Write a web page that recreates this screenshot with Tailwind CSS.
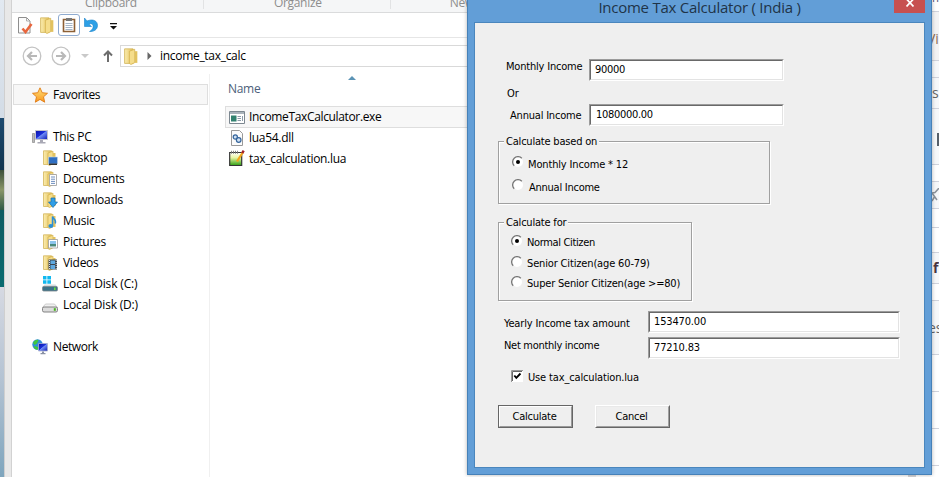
<!DOCTYPE html>
<html lang="en">
<head>
<meta charset="utf-8">
<title>Income Tax Calculator</title>
<script src="https://cdn.jsdelivr.net/npm/@tailwindcss/browser@4"></script>
</head>
<body class="relative h-[477px] w-[939px] overflow-hidden bg-white font-['Open_Sans','Noto_Sans',sans-serif] text-[12px] text-black">
<svg width="0" height="0" class="absolute">
  <defs>
    <linearGradient id="fg" x1="0" x2="1"><stop offset="0" stop-color="#fbedb0"/><stop offset="1" stop-color="#e3bf56"/></linearGradient>
    <linearGradient id="sg" x1="0" y1="0" x2="0" y2="1"><stop offset="0" stop-color="#ffe27a"/><stop offset="1" stop-color="#f9971e"/></linearGradient>
    <linearGradient id="scr" x1="0" y1="0" x2="1" y2="1"><stop offset="0" stop-color="#0a12a8"/><stop offset=".45" stop-color="#1b2fd8"/><stop offset=".5" stop-color="#6f8cf5"/><stop offset="1" stop-color="#0b18b5"/></linearGradient>
    <linearGradient id="gg" x1="0" y1="0" x2="0" y2="1"><stop offset="0" stop-color="#fff"/><stop offset=".4" stop-color="#e8f5a0"/><stop offset="1" stop-color="#2f9e12"/></linearGradient>
    <symbol id="folder" viewBox="0 0 16 16"><path d="M1.500.8h8v13.700h-8z" fill="url(#fg)" stroke="#d3b65c" stroke-width=".8"/><path d="M6 3 11 1.200v12.600L7.500 15.500 6 14.600z" fill="#f5dd8b" stroke="#d2b04b" stroke-width=".7"/><path d="M11 3h2.500v11H11z" fill="#e2c25f"/></symbol>
  </defs>
</svg>

<!-- wallpaper -->
<div class="absolute left-0 top-0 h-[477px] w-[5px]">
  <div class="h-[118px] bg-linear-to-b from-[#e2e9f1] to-[#d3dce6]"></div>
  <div class="h-[52px] bg-linear-to-b from-[#1d4a6e] to-[#12354f]"></div>
  <div class="h-[40px] bg-linear-to-b from-[#3c4f3a] via-[#8a9668] to-[#2f5a45]"></div>
  <div class="h-[77px] bg-linear-to-b from-[#0e5c62] to-[#0a6b70]"></div>
  <div class="h-[190px] bg-linear-to-b from-[#d6d9e2] via-[#b3c2d2] to-[#7ea5bd]"></div>
</div>

<!-- file explorer -->
<section class="absolute left-[4px] top-0 flex h-[477px] w-[470px] flex-col border-l border-[#cfcfcf] bg-[#e8e8e8] pl-[6px] tracking-[-0.3px]">
  <div class="flex h-full flex-col border-l border-[#d2d2d2] bg-white">
    <div class="flex h-[13px] shrink-0 overflow-hidden border-b border-[#dadbdc] bg-[#f5f6f7] leading-[16px] text-[#8d8d8d]">
      <div class="mb-[3px] w-[196px] border-r border-[#e2e3e4] pl-[73px]"><p class="-mt-[5px]">Clipboard</p></div>
      <div class="mb-[3px] w-[191px] border-r border-[#e2e3e4] pl-[70px]"><p class="-mt-[5px]">Organize</p></div>
      <div class="pl-[59px]"><p class="-mt-[5px]">New</p></div>
    </div>
    <div class="flex h-[25px] shrink-0 items-center border-b border-[#e6e6e6] pl-[5px]">
      <svg class="mr-[5px] h-[17px] w-[17px]" viewBox="0 0 17 17"><path d="M1.500.5h8l3.500 3.500v12H1.500z" fill="#fbfbfb" stroke="#8e8e8e"/><path d="M9.500.5v3.500H13" fill="none" stroke="#aaa"/><path d="M5.500 11.500 8.500 15 14.500 7" fill="none" stroke="#e8663d" stroke-width="2.600"/></svg>
      <svg class="mr-[2px] h-[17px] w-[17px]"><use href="#folder"/></svg>
      <div class="flex h-[22px] w-[22px] items-center justify-center rounded-[3px] border border-[#8fabd0]">
        <svg class="h-[16px] w-[14px]" viewBox="0 0 14 16"><path d="M1.500 2.500h11v12h-11z" fill="#fff" stroke="#8d5f34" stroke-width="1.600"/><path d="M4 1h6v3H4z" fill="#777"/><path d="M3.500 6.500h7m-7 2h7m-7 2h7m-7 2h7" stroke="#a5b5c8"/></svg>
      </div>
      <svg class="ml-[4px] h-[16px] w-[15px]" viewBox="0 0 15 16"><path d="M.5 1v8.500h7L5 7.200C7.500 6 9.800 7.500 9 10.500 8.500 12.300 7.500 13.300 5.500 14.500c4.500.3 8-2 8-6C13.500 3.800 9 1.500 3 4z" fill="#2da0e6" stroke="#1b83ca" stroke-width=".6"/></svg>
      <svg class="ml-[11px] mt-[2px] h-[7px] w-[7px]" viewBox="0 0 7 7"><path d="M0 0h7v1.300H0zM0 3h7L3.500 6.500z" fill="#111"/></svg>
    </div>
    <div class="flex h-[36px] shrink-0 items-center pl-[10px]">
      <svg class="mr-[9px] h-[20px] w-[20px]" viewBox="0 0 20 20" fill="none" stroke="#c3c3c3" stroke-width="1.300"><circle cx="10" cy="10" r="8.800"/><path d="M15 10H6m4-4-4 4 4 4" stroke="#b8b8b8" stroke-width="2.200"/></svg>
      <svg class="mr-[10px] h-[20px] w-[20px]" viewBox="0 0 20 20" fill="none" stroke="#c3c3c3" stroke-width="1.300"><circle cx="10" cy="10" r="8.800"/><path d="M5 10h9m-4-4 4 4-4 4" stroke="#b8b8b8" stroke-width="2.200"/></svg>
      <svg class="mr-[14px] h-[4px] w-[8px]" viewBox="0 0 8 4"><path d="M0 0h8L4 4z" fill="#c9c9c9"/></svg>
      <svg class="mr-[7px] h-[12px] w-[10px]" viewBox="0 0 10 12" fill="none" stroke="#6d6d6d" stroke-width="2"><path d="M5 12V1.500M1 5.500l4-4 4 4"/></svg>
      <div class="flex h-[22px] flex-1 items-center border border-r-0 border-[#d9d9d9] pl-[2px]">
        <svg class="h-[17px] w-[17px]"><use href="#folder"/></svg>
        <svg class="ml-[7px] h-[8px] w-[5px]" viewBox="0 0 5 8"><path d="M.5 0 4.500 4 .5 8z" fill="#666"/></svg>
        <span class="ml-[8px]">income_tax_calc</span>
      </div>
    </div>
    <div class="flex min-h-0 flex-1">
      <nav class="w-[198px] border-r border-[#f0f0f0] pt-[10px] leading-[21px]">
        <div class="ml-px mr-px flex h-[21px] items-center border border-[#dedede] bg-[#f7f7f7] pl-[18px]">
          <svg class="mr-[5px] h-[16px] w-[16px]" viewBox="0 0 16 16"><path d="m8 .8 2.200 4.900 5.300.6-4 3.500 1.200 5.400L8 12.400l-4.700 2.800 1.200-5.400-4-3.500 5.300-.6z" fill="url(#sg)" stroke="#e07b14" stroke-width=".9"/></svg>
          <span class="tracking-[-0.4px]">Favorites</span>
        </div>
        <div class="mt-[21px] flex h-[21px] items-center pl-[20px]">
          <svg class="mr-[5px] h-[16px] w-[16px]" viewBox="0 0 16 16"><path d="M.5 4.500h2v9h-2z" fill="#bbb" stroke="#888" stroke-width=".7"/><path d="M3.500 1.500h12v9h-12z" fill="url(#scr)" stroke="#c4c4cc"/><path d="M8 11h3v2H8zM5.500 13h8v1.600h-8z" fill="#a9a9b5"/></svg>
          <span>This PC</span>
        </div>
        <div class="flex h-[21px] items-center pl-[30px]">
          <svg class="mr-[5px] h-[16px] w-[16px]" viewBox="0 0 16 16"><use href="#folder"/><path d="M6.500 7h9v7h-9z" fill="#2f6fc2" stroke="#c5d6ea" stroke-width=".6"/><path d="M7 13.500h8v1.500H7z" fill="#333"/></svg>
          <span>Desktop</span>
        </div>
        <div class="flex h-[21px] items-center pl-[30px]">
          <svg class="mr-[5px] h-[16px] w-[16px]" viewBox="0 0 16 16"><use href="#folder"/><path d="M7.500 3.500h7v11h-7z" fill="#fff" stroke="#999" stroke-width=".8"/><path d="M9 6h4M9 8.200h4m-4 2.200h4m-4 2h4" stroke="#5d82b8" stroke-width=".9"/></svg>
          <span>Documents</span>
        </div>
        <div class="flex h-[21px] items-center pl-[30px]">
          <svg class="mr-[5px] h-[16px] w-[16px]" viewBox="0 0 16 16"><use href="#folder"/><path d="M9 6h4v4h2.500L11 15.500 6.500 10H9z" fill="#2f9ee6" stroke="#176fae" stroke-width=".7"/></svg>
          <span>Downloads</span>
        </div>
        <div class="flex h-[21px] items-center pl-[30px]">
          <svg class="mr-[5px] h-[16px] w-[16px]" viewBox="0 0 16 16"><use href="#folder"/><ellipse cx="8.800" cy="13" rx="2.400" ry="1.900" fill="#2b8fd8"/><path d="M10.500 13V3.500c.5 2.500 4.300 3.200 2.700 7" fill="none" stroke="#2b8fd8" stroke-width="1.500"/></svg>
          <span class="tracking-[-0.2px]">Music</span>
        </div>
        <div class="flex h-[21px] items-center pl-[30px]">
          <svg class="mr-[5px] h-[16px] w-[16px]" viewBox="0 0 16 16"><use href="#folder"/><path d="M6.500 5.500h9v8.500h-9z" fill="#fff" stroke="#999" stroke-width=".8"/><path d="M8 7h6v3H8z" fill="#8cc4ec"/><path d="M8 10h6v2.500H8z" fill="#4a8a7c"/></svg>
          <span class="tracking-[-0.25px]">Pictures</span>
        </div>
        <div class="flex h-[21px] items-center pl-[30px]">
          <svg class="mr-[5px] h-[16px] w-[16px]" viewBox="0 0 16 16"><use href="#folder"/><path d="M6.500 4.500h8.500v10H6.500z" fill="#3d4650"/><path d="M8.500 5.500h4.500v3.500H8.500zm0 4.500h4.500v4H8.500z" fill="#5fa9e0"/><path d="M7.500 5v10M14.200 5v10" stroke="#ddd" stroke-dasharray="1 1"/></svg>
          <span>Videos</span>
        </div>
        <div class="flex h-[21px] items-center pl-[30px]">
          <svg class="mr-[5px] h-[16px] w-[16px]" viewBox="0 0 16 16"><path d="M1 0h3.500v3.500H1zM5.300 0h3.700v3.500H5.300zM1 4.300h3.500v3.500H1zM5.300 4.300h3.700v3.500H5.300z" fill="#10b8f0"/><path d="m2.500 8.500h11l2 2.500H.5z" fill="#d4dade"/><rect x=".5" y="10.500" width="15" height="4.500" rx="1.200" fill="#3c7288" stroke="#7a858c" stroke-width=".8"/><path d="M12 11.500h1.600v2.500H12z" fill="#63e03c"/></svg>
          <span class="tracking-[-0.15px]">Local Disk (C:)</span>
        </div>
        <div class="flex h-[21px] items-center pl-[30px]">
          <svg class="mr-[5px] h-[16px] w-[16px]" viewBox="0 0 16 16"><path d="M3.500 7h9l3 3.500H.5z" fill="#f1f1f1" stroke="#bbb" stroke-width=".7"/><rect x=".5" y="10" width="15" height="5" rx="1.500" fill="#dcdcdc" stroke="#777" stroke-width=".9"/><path d="M11.800 11.200h2v2.600h-2z" fill="#45b51e"/></svg>
          <span class="tracking-[-0.2px]">Local Disk (D:)</span>
        </div>
        <div class="mt-[21px] flex h-[21px] items-center pl-[20px]">
          <svg class="mr-[5px] h-[16px] w-[16px]" viewBox="0 0 16 16"><circle cx="5.500" cy="5.500" r="5.200" fill="#2f8fd8"/><path d="M1 3.500C3 1 5 .5 6.500 1L5 4.500 2.500 6zM3 7l3 1v2.500l-2 .2L1.500 8z" fill="#3fc83c"/><path d="M6.500 4.500h9v7.500h-9z" fill="url(#scr)" stroke="#a9b0cc" stroke-width=".8"/><path d="M10 12.500h2v1.500h-2zM8.500 14h5v1.200h-5z" fill="#8a91a5"/></svg>
          <span class="tracking-[-0.4px]">Network</span>
        </div>
      </nav>
      <div class="flex-1 pl-[15px]">
        <svg class="ml-[123px] mt-[2px] h-[4px] w-[8px]" viewBox="0 0 8 4"><path d="M0 4 4 0 8 4z" fill="#5b93b5"/></svg>
        <p class="ml-[3px] w-fit leading-[18px] text-[#4c607a]">Name</p>
        <div class="mt-[8px] flex h-[22px] items-center border border-r-0 border-[#dedede] bg-[#f7f7f7] pl-[3px]">
          <svg class="mr-[4px] h-[13px] w-[16px]" viewBox="0 0 16 13"><path d="M.5.5h15v12H.5z" fill="#fff" stroke="#7c8790"/><path d="M1 1h14v2H1z" fill="#a9b3bb"/><path d="M2 4.500h5.500v6H2z" fill="#31816f"/><path d="M8.500 5.500h3.500m-3.500 2h3.500m-3.500 2h3.500M13.500 5v5" stroke="#8a9aa8"/></svg>
          <span class="tracking-[-0.35px]">IncomeTaxCalculator.exe</span>
        </div>
        <div class="flex h-[20px] items-center pl-[4px]">
          <svg class="mr-[4px] h-[16px] w-[16px]" viewBox="0 0 16 16"><path d="M2.500.5h8l3 3v12h-11z" fill="#fbfbfb" stroke="#999"/><circle cx="6.300" cy="7" r="2.100" fill="#cfe0f2" stroke="#35659c" stroke-width="1.200"/><circle cx="9.700" cy="10" r="2.300" fill="#cfe0f2" stroke="#35659c" stroke-width="1.200"/></svg>
          <span>lua54.dll</span>
        </div>
        <div class="flex h-[21px] items-center pl-[4px]">
          <svg class="mr-[4px] h-[17px] w-[16px]" viewBox="0 0 16 17"><path d="M.7 2.500h12v13H.7z" fill="url(#gg)" stroke="#333" stroke-width="1.200"/><path d="M2.500.8v3m2-3v3m2-3v3m2-3v3" stroke="#777" stroke-width=".9"/><path d="M8 11.500 14 2" stroke="#f2a51d" stroke-width="2.200"/><path d="m13.200 3.200 1.500-2.500" stroke="#a3212a" stroke-width="2.400"/></svg>
          <span>tax_calculation.lua</span>
        </div>
      </div>
    </div>
  </div>
</section>

<!-- browser page -->
<aside class="absolute left-[908px] top-0 flex h-[477px] w-[31px] flex-col overflow-hidden bg-white pl-[24px] text-[14px] leading-none text-[#666]">
  <div class="h-[11px] text-[12px]"><p class="-mt-[8px] text-[#557]">m</p></div>
  <div class="h-[50px] border-b border-t border-[#d0d3dc] bg-[#f3f3f4] pt-[20px]"><p class="-ml-[5px] text-[#8a6a55]">Vi</p></div>
  <div class="h-[17px] border-b border-[#d0d3dc] bg-[#f6f8fa]"></div>
  <div class="h-[31px] border-b border-[#d0d3dc] bg-[#f6f8fa] pt-[8px]">s</div>
  <div class="h-[56px] border-b border-[#d0d3dc] bg-[#f6f8fa] pl-[5px] pt-[24px]"><div class="h-[13px] w-[10px] border-2 border-[#57606a]"></div></div>
  <div class="h-[17px] border-b border-[#d0d3dc]"></div>
  <div class="h-[27px] border-b border-[#d0d3dc] bg-[#f6f8fa] pt-[6px]"><svg class="h-[14px] w-[14px]" viewBox="0 0 14 14" fill="none" stroke="#8b929a" stroke-width="1.500"><path d="M0 5 3 4.500 7 0M0 5l5 7M3 8l-3 5"/></svg></div>
  <div class="h-[19px] border-b border-[#d0d3dc]"></div>
  <div class="h-[25px] border-b border-[#d0d3dc]"></div>
  <div class="h-[31px] border-b border-[#d0d3dc] bg-[#f6f8fa] pl-px pt-[8px] font-bold text-[#4a3540]">fi</div>
  <div class="h-[17px] border-b border-[#d0d3dc]"></div>
  <div class="h-[54px] border-b border-[#d0d3dc] bg-[#f6f8fa] pt-[20px]"><p class="-ml-[4px]">es</p></div>
  <div class="h-[37px] border-b border-[#d0d3dc]"></div>
  <div class="h-[37px] border-b border-[#d0d3dc]"></div>
  <div class="h-[37px] border-b border-[#d0d3dc]"></div>
  <div class="-ml-[24px] mt-auto h-[2px] w-[8px] bg-[#d5d5d8]"></div>
</aside>

<!-- calculator dialog -->
<section class="absolute left-[467px] top-0 flex h-[475px] w-[465px] flex-col border border-t-0 border-[#4681b8] bg-[#629ed7] px-[6px] pb-[6px] shadow-[0_0_4px_rgba(0,0,0,0.3)]">
  <header class="relative flex h-[22px] shrink-0 justify-center text-[15px] leading-[15px] tracking-[-0.25px] text-[#1f3448]">
    <h1 class="h-fit whitespace-pre">Income Tax Calculator ( India )</h1>
    <button class="absolute right-0 top-0 flex h-[13px] w-[31px] justify-center bg-[#c75050]" aria-label="Close"><svg class="-mt-px h-[8px] w-[8px]" viewBox="0 0 8 8"><path d="m.5 0 7 7.500M7.500 0l-7 7.500" stroke="#fff" stroke-width="1.700"/></svg></button>
  </header>
  <main class="flex-1 border border-[#4a86bd] bg-[#efefef] pl-[23px] pt-[36px] font-['DejaVu_Sans_Condensed','DejaVu_Sans',sans-serif] text-[11px] leading-[14px] tracking-[-0.15px]">
    <div class="flex h-[22px]">
      <label class="ml-[8px] mt-px w-[83px] shrink-0 tracking-[-0.2px]">Monthly Income</label>
      <div class="h-[22px] w-[195px] border border-b-white border-l-[#9b9b9b] border-r-white border-t-[#9b9b9b]"><div class="h-full border border-b-[#e3e3e3] border-l-[#696969] border-r-[#e3e3e3] border-t-[#696969] bg-white pl-[4px] pt-[2px] tracking-[-0.3px]">90000</div></div>
    </div>
    <p class="ml-[9px] mt-[6px] h-[17px] w-fit">Or</p>
    <div class="flex h-[22px]">
      <label class="ml-[12px] mt-[5px] w-[79px] shrink-0 tracking-[-0.2px]">Annual Income</label>
      <div class="h-[22px] w-[195px] border border-b-white border-l-[#9b9b9b] border-r-white border-t-[#9b9b9b]"><div class="h-full border border-b-[#e3e3e3] border-l-[#696969] border-r-[#e3e3e3] border-t-[#696969] bg-white pl-[5px] pt-[2px] tracking-[-0.3px]">1080000.00</div></div>
    </div>
    <fieldset class="mt-[15px] h-[63px] w-[272px] border border-[#a0a0a0] shadow-[1px_1px_0_#fff,inset_1px_1px_0_#fff] pl-[13px]">
      <p class="-ml-[8px] -mt-[7px] w-fit bg-[#efefef] px-[2px] tracking-[-0.2px]">Calculate based on</p>
      <div class="mt-[7px] flex h-[15px]"><svg class="mr-[4px] h-[12px] w-[12px]" viewBox="0 0 12 12"><circle cx="6" cy="6" r="5" fill="#fff"/><path d="M2.200 9.800A5.300 5.300 0 0 1 9.800 2.200" fill="none" stroke="#777" stroke-width="1.300"/><circle cx="6" cy="6" r="2" fill="#000"/></svg><span class="mt-[2px]">Monthly Income * 12</span></div>
      <div class="mt-[8px] flex h-[15px]"><svg class="mr-[5px] h-[12px] w-[12px]" viewBox="0 0 12 12"><circle cx="6" cy="6" r="5" fill="#fff"/><path d="M2.200 9.800A5.300 5.300 0 0 1 9.800 2.200" fill="none" stroke="#777" stroke-width="1.300"/></svg><span class="mt-[2px] tracking-[-0.25px]">Annual Income</span></div>
    </fieldset>
    <fieldset class="mt-[18px] h-[79px] w-[194px] border border-[#a0a0a0] shadow-[1px_1px_0_#fff,inset_1px_1px_0_#fff] pl-[12px]">
      <p class="-ml-[7px] -mt-[7px] w-fit bg-[#efefef] px-[2px] tracking-[-0.2px]">Calculate for</p>
      <div class="mt-[4px] flex h-[21px]"><svg class="mr-[4px] mt-px h-[12px] w-[12px]" viewBox="0 0 12 12"><circle cx="6" cy="6" r="5" fill="#fff"/><path d="M2.200 9.800A5.300 5.300 0 0 1 9.800 2.200" fill="none" stroke="#777" stroke-width="1.300"/><circle cx="6" cy="6" r="2" fill="#000"/></svg><span class="mt-[2px] tracking-[-0.35px]">Normal Citizen</span></div>
      <div class="flex h-[20px]"><svg class="mr-[4px] mt-px h-[12px] w-[12px]" viewBox="0 0 12 12"><circle cx="6" cy="6" r="5" fill="#fff"/><path d="M2.200 9.800A5.300 5.300 0 0 1 9.800 2.200" fill="none" stroke="#777" stroke-width="1.300"/></svg><span class="mt-[2px]">Senior Citizen(age 60-79)</span></div>
      <div class="flex h-[20px]"><svg class="mr-[4px] mt-px h-[12px] w-[12px]" viewBox="0 0 12 12"><circle cx="6" cy="6" r="5" fill="#fff"/><path d="M2.200 9.800A5.300 5.300 0 0 1 9.800 2.200" fill="none" stroke="#777" stroke-width="1.300"/></svg><span class="mt-[2px] tracking-[-0.2px]">Super Senior Citizen(age &gt;=80)</span></div>
    </fieldset>
    <div class="mt-[10px] flex h-[26px]">
      <label class="ml-[6px] mt-[6px] w-[144px] shrink-0">Yearly Income tax amount</label>
      <div class="h-[22px] w-[252px] border border-b-white border-l-[#9b9b9b] border-r-white border-t-[#9b9b9b]"><div class="h-full border border-b-[#e3e3e3] border-l-[#696969] border-r-[#e3e3e3] border-t-[#696969] bg-white pl-[4px] pt-[2px]">153470.00</div></div>
    </div>
    <div class="flex h-[33px]">
      <label class="ml-[6px] mt-[2px] w-[144px] shrink-0 tracking-[-0.3px]">Net monthly income</label>
      <div class="h-[22px] w-[252px] border border-b-white border-l-[#9b9b9b] border-r-white border-t-[#9b9b9b]"><div class="h-full border border-b-[#e3e3e3] border-l-[#696969] border-r-[#e3e3e3] border-t-[#696969] bg-white pl-[4px] pt-[2px]">77210.83</div></div>
    </div>
    <div class="flex h-[35px] pl-[13px]"><svg class="mr-[5px] h-[12px] w-[12px]" viewBox="0 0 12 12"><path d="M0 0h12v12H0z" fill="#fff"/><path d="M.5 12V.5H12" fill="none" stroke="#999"/><path d="M1.500 11V1.500H11" fill="none" stroke="#666"/><path d="m3.300 5.500 2 2.300L9.500 3.500" fill="none" stroke="#000" stroke-width="1.900"/></svg><span class="mt-px">Use tax_calculation.lua</span></div>
    <div class="flex gap-[22px]">
      <button class="h-[23px] w-[75px] border border-[#666] bg-[#efefef]"><span class="flex h-full items-center justify-center border border-b-[#999] border-l-white border-r-[#999] border-t-white pr-[2px] tracking-[-0.25px]">Calculate</span></button>
      <button class="h-[23px] w-[75px] border border-b-[#666] border-l-white border-r-[#666] border-t-white bg-[#efefef]"><span class="flex h-full items-center justify-center border border-b-[#a0a0a0] border-l-[#e9e9e9] border-r-[#a0a0a0] border-t-[#e9e9e9] pr-[2px] tracking-[-0.25px]">Cancel</span></button>
    </div>
  </main>
</section>
</body>
</html>
